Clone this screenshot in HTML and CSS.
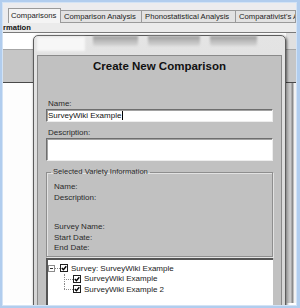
FILE: index.html
```html
<!DOCTYPE html>
<html lang="en">
<head>
  <meta charset="UTF-8">
  <title>Create New Comparison</title>
  <link rel="stylesheet" href="styles.css">
</head>
<body>
  <div class="screen">
    <div class="tabs">
      <div class="tab active">Comparisons</div>
      <div class="tab t2">Comparison Analysis</div>
      <div class="tab t3">Phonostatistical Analysis</div>
      <div class="tab t4">Comparativist's Analysis</div>
    </div>
    <div class="section-title">rmation</div>
    <div class="toolbar"></div>
    <div class="band"></div>
    <div class="list"></div>

    <div class="dialog">
      <div class="dialog-glass">
        <span class="ghost-light"></span>
        <span class="ghost-btn b1"></span>
        <span class="ghost-btn b2"></span>
        <span class="ghost-btn b3"></span>
      </div>
      <div class="dialog-body">
        <h1>Create New Comparison</h1>
        <div class="label name-label">Name:</div>
        <div class="field">SurveyWiki Example<span class="caret"></span></div>
        <div class="label desc-label">Description:</div>
        <div class="field tall"></div>

        <fieldset class="group">
          <legend>Selected Variety Information</legend>
          <div class="info">Name:</div>
          <div class="info">Description:</div>
          <div class="info gap">Survey Name:</div>
          <div class="info">Start Date:</div>
          <div class="info">End Date:</div>
        </fieldset>

        <div class="tree">
          <div class="node root">
            <span class="expander"></span>
            <span class="stub"></span>
            <span class="check"><svg width="6" height="6" viewBox="0 0 6 6"><path d="M0.8 3 L2.4 4.7 L5.3 1.2" fill="none" stroke="#000" stroke-width="1.4"/></svg></span>
            <span class="text">Survey: SurveyWiki Example</span>
          </div>
          <div class="node child">
            <span class="branch"></span>
            <span class="check"><svg width="6" height="6" viewBox="0 0 6 6"><path d="M0.8 3 L2.4 4.7 L5.3 1.2" fill="none" stroke="#000" stroke-width="1.4"/></svg></span>
            <span class="text">SurveyWiki Example</span>
          </div>
          <div class="node child last">
            <span class="branch"></span>
            <span class="check"><svg width="6" height="6" viewBox="0 0 6 6"><path d="M0.8 3 L2.4 4.7 L5.3 1.2" fill="none" stroke="#000" stroke-width="1.4"/></svg></span>
            <span class="text">SurveyWiki Example 2</span>
          </div>
        </div>
      </div>
    </div>
  </div>
</body>
</html>
```

FILE: styles.css
```css
* {
  box-sizing: border-box;
}

body {
  margin: 0;
  width: 300px;
  height: 308px;
  overflow: hidden;
  background: #b1cdee;
  font-family: "Liberation Sans", Arial, sans-serif;
}

.screen {
  position: relative;
  margin: 3px 4px 0 3px;
  height: 302px;
  overflow: hidden;
  background: #fff;
  box-shadow: 0 0 0 1px #d3e3f5;
}

/* tab strip */
.tabs {
  display: flex;
  align-items: flex-end;
  height: 20px;
  padding-left: 5px;
  background: #ececee;
}

.tab {
  height: 13px;
  padding: 0 4px 0 3px;
  font-size: 7.7px;
  line-height: 11px;
  color: #222;
  white-space: nowrap;
  overflow: hidden;
  background: #e2e2e2;
  border: 1px solid #9a9a9a;
  border-left: none;
}

.tab.active {
  width: 53px;
  height: 15px;
  padding-left: 2px;
  line-height: 14px;
  background: #f4f4f4;
  border-left: 1px solid #9a9a9a;
  border-bottom: none;
}

.tab.t2 { width: 81px; }
.tab.t3 { width: 94px; }
.tab.t4 { flex: 1; }

.section-title {
  height: 10px;
  line-height: 9px;
  font-size: 7.6px;
  font-weight: bold;
  color: #111;
  background: #ebebeb;
  border-bottom: 1px solid #7a7a7a;
}

.toolbar {
  height: 16px;
  background: linear-gradient(to right, #fff 283px, #e0e0e0 283px);
}

.band {
  height: 34px;
  background: #c6c6c6;
  border-top: 1px solid #a6a6a6;
  border-bottom: 1px solid #4a4a4a;
}

.list {
  height: 220px;
  background: linear-gradient(to right, #fdfdfd 283px, #c9c9c9 285px, #c9c9c9 288px, #8a8a8a 289px, #8a8a8a 290px, #f2f2f2 291px);
}

/* dialog window */
.dialog {
  position: absolute;
  left: 30px;
  top: 32px;
  width: 253px;
  height: 290px;
  display: flex;
  flex-direction: column;
  padding: 0 3px;
  border: 1px solid #5c5c5c;
  border-radius: 5px 5px 0 0;
  background: linear-gradient(#e4e4e4, #d4d4d4);
  box-shadow: 1px 1px 3px rgba(0, 0, 0, 0.6);
}

.dialog-glass {
  display: flex;
  height: 19px;
  overflow: hidden;
  filter: blur(1.3px);
}

.ghost-light {
  width: 48px;
  height: 14px;
  margin-top: 1px;
  background: #f7f7f7;
}

.ghost-btn {
  height: 12px;
  margin-top: -2px;
  background: linear-gradient(#8e8e8e, #c4c4c4 70%, #d6d6d6);
  border-radius: 2px;
}

.b1 { width: 45px; margin-left: 8px; }
.b2 { width: 52px; margin-left: 10px; }
.b3 { width: 47px; margin-left: 10px; }

.dialog-body {
  flex: 1;
  padding: 0 8px;
  background: #c1c1c1;
  border: 1px solid #8a8a8a;
}

.dialog-body h1 {
  margin: 3px 0 0;
  font-size: 11.5px;
  line-height: 14px;
  text-align: center;
  color: #111;
}

.label {
  padding-left: 2px;
  font-size: 8px;
  line-height: 10px;
  color: #2a2a2a;
}

.name-label { margin-top: 26px; }
.desc-label { margin-top: 6px; }

.field {
  display: flex;
  align-items: center;
  height: 13px;
  padding-left: 1px;
  font-size: 8px;
  color: #111;
  background: #fff;
  border: 1px solid;
  border-color: #6e6e6e #ededed #ededed #6e6e6e;
  box-shadow: inset 1px 1px #a2a2a2;
}

.field.tall {
  height: 23px;
}

.caret {
  width: 1px;
  height: 9px;
  margin-left: 1px;
  background: #000;
}

/* group box */
.group {
  margin: 6px 0 0;
  padding: 5px 7px 2.5px;
  min-width: 0;
  border: 1px solid #8e8e8e;
  box-shadow: inset 1px 1px #e2e2e2, 1px 1px #e2e2e2;
}

.group legend {
  margin-left: -3px;
  padding: 0 2px;
  font-size: 7.6px;
  line-height: 10px;
  color: #2a2a2a;
}

.info {
  font-size: 8px;
  line-height: 10.5px;
  color: #2a2a2a;
}

.info.gap {
  margin-top: 19px;
}

/* tree view */
.tree {
  height: 60px;
  margin-top: 1px;
  padding-top: 3px;
  background: #fff;
  border-top: 2px solid #555;
  border-left: 2px solid #555;
}

.node {
  display: flex;
  align-items: center;
  height: 10.5px;
  font-size: 8px;
  color: #1a1a1a;
}

.node.child {
  padding-left: 16px;
}

.expander {
  position: relative;
  width: 7px;
  height: 7px;
  border: 1px solid #8c8c8c;
}

.expander::after {
  content: '';
  position: absolute;
  left: 1px;
  right: 1px;
  top: 2px;
  border-top: 1px solid #333;
}

.stub {
  width: 5px;
  border-top: 1px dotted #8a8a8a;
}

.branch {
  position: relative;
  align-self: stretch;
  width: 9px;
}

.branch::before {
  content: '';
  position: absolute;
  left: 0;
  top: 0;
  bottom: 0;
  border-left: 1px dotted #8a8a8a;
}

.last .branch::before {
  bottom: 50%;
}

.branch::after {
  content: '';
  position: absolute;
  left: 0;
  right: 0;
  top: 50%;
  border-top: 1px dotted #8a8a8a;
}

.check {
  display: flex;
  align-items: center;
  justify-content: center;
  width: 8px;
  height: 8px;
  background: #fff;
  border: 1px solid #1e1e1e;
}

.node .text {
  margin-left: 3px;
  white-space: nowrap;
}
```
